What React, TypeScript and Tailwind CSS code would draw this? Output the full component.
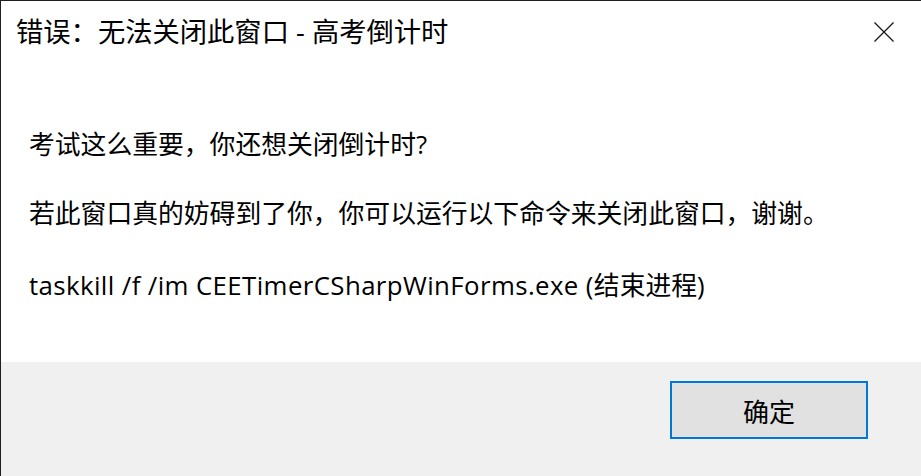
import React from 'react';

const cjk = '"Open Sans", "Noto Sans CJK SC", sans-serif';

function CloseIcon() {
    return (
        <svg width="20" height="20" viewBox="0 0 20 20" fill="none">
            <path d="M0.5 0.5L19.5 19.5M19.5 0.5L0.5 19.5" stroke="#1a1a1a" strokeWidth="1.3" />
        </svg>
    );
}

export default function App() {
    return (
        <div
            className="w-[921px] h-[476px] bg-white border-l border-t border-[#1f1f1f] flex flex-col text-black overflow-hidden"
            style={{ fontFamily: cjk }}
        >
            <div className="h-[62px] flex items-center justify-between pl-[15px] pr-[27px]">
                <div className="text-[27.3px] leading-[36px]">错误：无法关闭此窗口 - 高考倒计时</div>
                <CloseIcon />
            </div>

            <div className="flex-1 flex flex-col pl-[28px] text-[25.8px] leading-[36px]">
                <div className="mt-[63px]">考试这么重要，你还想关闭倒计时?</div>
                <div className="mt-[33px]">若此窗口真的妨碍到了你，你可以运行以下命令来关闭此窗口，谢谢。</div>
                <div className="mt-[36px]">
                    <span className="tracking-[0.4px]">taskkill /f /im CEETimerCSharpWinForms.exe (</span>
                    结束进程)
                </div>
            </div>

            <div className="h-[114px] bg-[#f0f0f0] flex justify-end items-start pt-[19px] pr-[53px]">
                <button className="w-[198px] h-[58px] border-2 border-[#0078d7] bg-[#e1e1e1] text-[26px] leading-[36px] flex items-center justify-center pt-[3px]">
                    确定
                </button>
            </div>
        </div>
    );
}
